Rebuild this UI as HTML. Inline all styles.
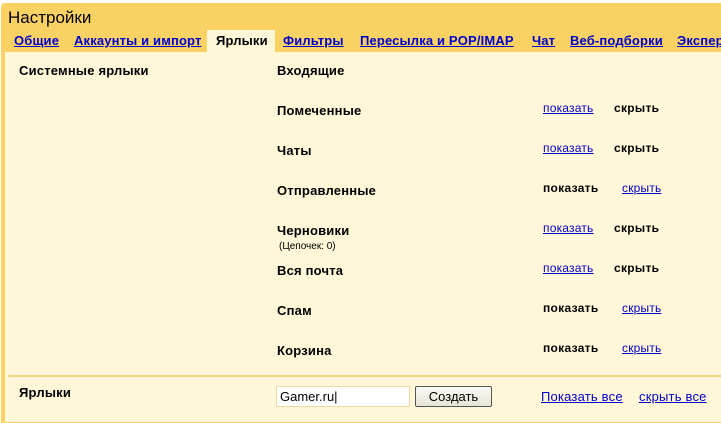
<!DOCTYPE html>
<html><head><meta charset="utf-8"><style>
body{margin:0;width:721px;height:413px;overflow:hidden;background:#fff;font-family:Arial,"Liberation Sans",sans-serif;position:relative}
#frame{position:absolute;left:1px;top:3px;width:730px;height:420px;background:#fad163;border-radius:4px 0 0 0}
#content{position:absolute;left:5px;top:52px;width:730px;height:370px;background:#fff7d7}
.a{position:absolute;white-space:nowrap}
h1{position:absolute;left:8px;top:8px;margin:0;font-size:17px;font-weight:normal;color:#000}
.tab{position:absolute;top:33px;font-size:13px;font-weight:bold;color:#0000cc;text-decoration:underline;letter-spacing:0.15px}
.act{position:absolute;left:207px;top:30px;width:68px;height:22px;background:#fff7d7}
.b{font-weight:bold;font-size:13px;color:#000;letter-spacing:0.2px}
.l{font-size:12px;color:#0000cc;text-decoration:underline;letter-spacing:0.2px}
.s{font-size:12px;font-weight:bold;color:#000;letter-spacing:0.3px}
</style></head><body>
<div id="frame"></div>
<div id="content"></div>
<h1>Настройки</h1>
<div class="act"></div>
<span class="tab" style="left:14px">Общие</span>
<span class="tab" style="left:74px">Аккаунты и импорт</span>
<span class="tab" style="left:216px;color:#000;text-decoration:none">Ярлыки</span>
<span class="tab" style="left:283px">Фильтры</span>
<span class="tab" style="left:360px">Пересылка и POP/IMAP</span>
<span class="tab" style="left:532px">Чат</span>
<span class="tab" style="left:570px">Веб-подборки</span>
<span class="tab" style="left:677px">Экспер</span>

<span class="a b" style="left:19px;top:63px">Системные ярлыки</span>
<span class="a b" style="left:277px;top:63px">Входящие</span>

<span class="a b" style="left:277px;top:103px">Помеченные</span>
<span class="a l" style="left:543px;top:101px">показать</span><span class="a s" style="left:614px;top:101px">скрыть</span>
<span class="a b" style="left:277px;top:143px">Чаты</span>
<span class="a l" style="left:543px;top:141px">показать</span><span class="a s" style="left:614px;top:141px">скрыть</span>
<span class="a b" style="left:277px;top:183px">Отправленные</span>
<span class="a s" style="left:543px;top:181px">показать</span><span class="a l" style="left:622px;top:181px">скрыть</span>
<span class="a b" style="left:277px;top:223px">Черновики</span>
<span class="a" style="left:279px;top:241px;font-size:10px">(Цепочек: 0)</span>
<span class="a l" style="left:543px;top:221px">показать</span><span class="a s" style="left:614px;top:221px">скрыть</span>
<span class="a b" style="left:277px;top:263px">Вся почта</span>
<span class="a l" style="left:543px;top:261px">показать</span><span class="a s" style="left:614px;top:261px">скрыть</span>
<span class="a b" style="left:277px;top:303px">Спам</span>
<span class="a s" style="left:543px;top:301px">показать</span><span class="a l" style="left:622px;top:301px">скрыть</span>
<span class="a b" style="left:277px;top:343px">Корзина</span>
<span class="a s" style="left:543px;top:341px">показать</span><span class="a l" style="left:622px;top:341px">скрыть</span>

<div class="a" style="left:8px;top:375px;width:713px;height:2px;background:#f3d68a"></div>
<span class="a b" style="left:19px;top:385px">Ярлыки</span>
<div class="a" style="left:276px;top:386px;width:134px;height:21px;background:#fff;border:1px solid #f0dca0;box-sizing:border-box;font-size:13px;padding:2px 3px">Gamer.ru|</div>
<div class="a" style="left:415px;top:386px;width:77px;height:21px;background:linear-gradient(#fbfaf5,#e8e4d6);border:1px solid #555;border-radius:2px;box-sizing:border-box;font-size:13px;text-align:center;line-height:19px">Создать</div>
<span class="a l" style="left:541px;top:389px;font-size:13px">Показать все</span>
<span class="a l" style="left:639px;top:389px;font-size:13px">скрыть все</span>
</body></html>
